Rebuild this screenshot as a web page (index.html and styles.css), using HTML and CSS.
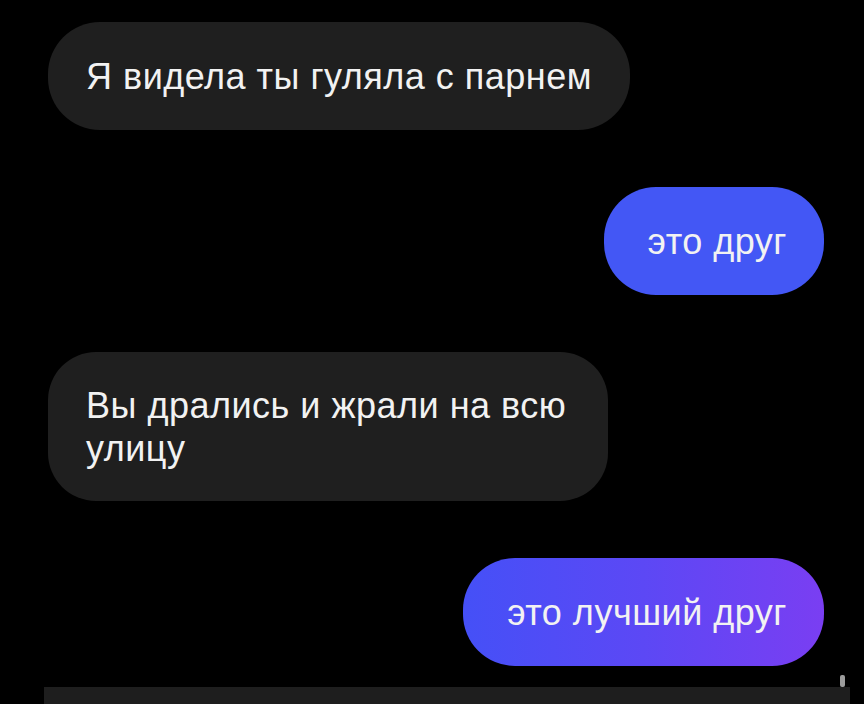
FILE: index.html
```html
<!DOCTYPE html>
<html lang="ru">

<head>
  <meta charset="UTF-8" />
  <meta name="viewport" content="width=device-width, initial-scale=1.0" />
  <title>Чат</title>
  <link rel="stylesheet" href="styles.css">
</head>

<body>
  <div class="chat">
    <div class="msg in">Я видела ты гуляла с парнем</div>
    <div class="msg out">это друг</div>
    <div class="msg in long">Вы дрались и жрали на всю улицу</div>
    <div class="msg out gradient">это лучший друг</div>
  </div>

  <div class="composer">
    <span class="caret"></span>
  </div>
</body>

</html>
```

FILE: styles.css
```css
body {
  font-family: "Liberation Sans", Arial, sans-serif;
  background-color: #000;
  color: #f2f2f2;
  margin: 0;
  padding: 0;
}

.chat {
  display: flex;
  flex-direction: column;
  gap: 57px;
  padding: 22px 40px 0 48px;
}

.msg {
  font-size: 36px;
  letter-spacing: 0.5px;
  line-height: 43px;
  padding: 33px 38px 32px;
  border-radius: 52px;
  max-width: 600px;
  box-sizing: border-box;
}

.msg.in {
  align-self: flex-start;
  background-color: #1f1f1f;
}

.msg.long {
  max-width: 560px;
  border-radius: 48px;
  padding-top: 32px;
  padding-bottom: 31px;
}

.msg.out {
  align-self: flex-end;
  padding: 33px 37px 32px 44px;
  background-color: #4357f5;
}

.msg.gradient {
  background: linear-gradient(90deg, #4550f7 0%, #5c48f5 50%, #7a3ef2 100%);
}

.composer {
  position: relative;
  margin: 21px 14px 0 44px;
  height: 20px;
  background-color: #1e1e1e;
}

/* little scroll marker above the input bar */
.caret {
  position: absolute;
  right: 5px;
  top: -12px;
  width: 5px;
  height: 12px;
  border-radius: 2px;
  background-color: #9c9c9c;
}
```
